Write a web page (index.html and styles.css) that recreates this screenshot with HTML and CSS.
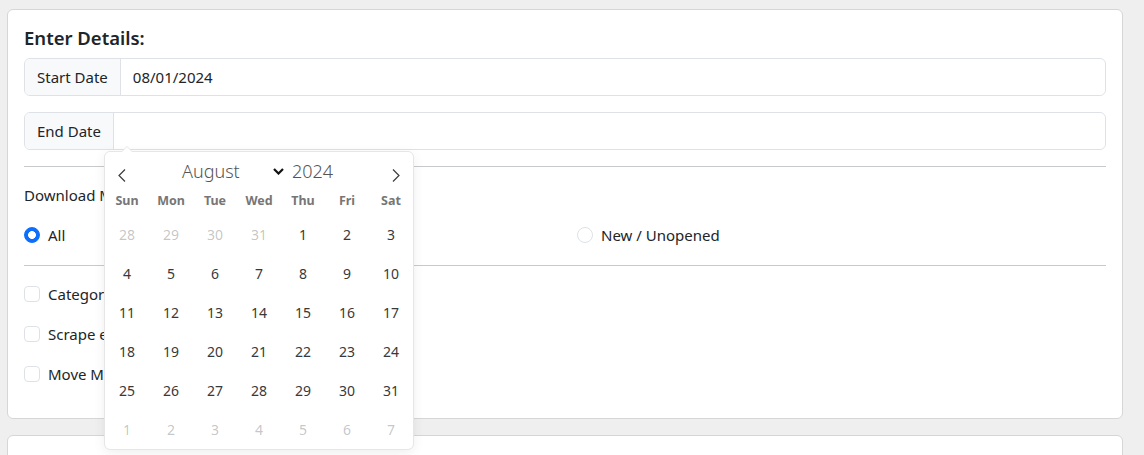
FILE: index.html
```html
<!DOCTYPE html>
<html lang="en">
<head>
<meta charset="utf-8">
<title>Enter Details</title>
<link rel="stylesheet" href="styles.css">
</head>
<body>
<div class="page">
  <div class="card">
    <div class="card-body">
      <h5 class="title">Enter Details:</h5>
      <div class="input-group gap-below">
        <span class="addon">Start Date</span>
        <input class="field" type="text" value="08/01/2024">
      </div>
      <div class="input-group end-group">
        <span class="addon">End Date</span>
        <input class="field" type="text" value="">
        <div class="fp">
          <div class="fp-months">
            <span class="fp-nav fp-prev">
              <svg width="8" height="13" viewBox="0 0 8 13"><polyline points="7,0.5 1,6.5 7,12.5" fill="none" stroke="#3c3c3c" stroke-width="1.2"/></svg>
            </span>
            <div class="fp-current">
              <span class="fp-month">August<svg class="fp-chev" width="11" height="7" viewBox="0 0 11 7"><polyline points="1,1 5.5,5.5 10,1" fill="none" stroke="#111" stroke-width="2.2"/></svg></span>
              <span class="fp-year">2024</span>
            </div>
            <span class="fp-nav fp-next">
              <svg width="8" height="13" viewBox="0 0 8 13"><polyline points="1,0.5 7,6.5 1,12.5" fill="none" stroke="#3c3c3c" stroke-width="1.2"/></svg>
            </span>
          </div>
          <div class="fp-weekdays">
            <span>Sun</span><span>Mon</span><span>Tue</span><span>Wed</span><span>Thu</span><span>Fri</span><span>Sat</span>
          </div>
          <div class="fp-days">
            <span class="other">28</span><span class="other">29</span><span class="other">30</span><span class="other">31</span><span>1</span><span>2</span><span>3</span>
            <span>4</span><span>5</span><span>6</span><span>7</span><span>8</span><span>9</span><span>10</span>
            <span>11</span><span>12</span><span>13</span><span>14</span><span>15</span><span>16</span><span>17</span>
            <span>18</span><span>19</span><span>20</span><span>21</span><span>22</span><span>23</span><span>24</span>
            <span>25</span><span>26</span><span>27</span><span>28</span><span>29</span><span>30</span><span>31</span>
            <span class="other">1</span><span class="other">2</span><span class="other">3</span><span class="other">4</span><span class="other">5</span><span class="other">6</span><span class="other">7</span>
          </div>
        </div>
      </div>
      <hr class="rule">
      <div class="label">Download Mode:</div>
      <div class="radio-row">
        <div class="col">
          <label class="check"><span class="radio checked"></span><span>All</span></label>
        </div>
        <div class="col">
          <label class="check"><span class="radio"></span><span>New / Unopened</span></label>
        </div>
      </div>
      <hr class="rule rule-2">
      <label class="check check-row"><span class="box"></span><span>Categorize downloads</span></label>
      <label class="check check-row"><span class="box"></span><span>Scrape episode metadata</span></label>
      <label class="check check-row"><span class="box"></span><span>Move Media to library</span></label>
    </div>
  </div>
  <div class="card card-next"></div>
</div>
</body>
</html>
```

FILE: styles.css
```css
* { box-sizing: border-box; }

html, body {
  margin: 0;
  background: #efefef;
}

body {
  font-family: "Noto Sans", "Open Sans", "DejaVu Sans", sans-serif;
  font-size: 15px;
  line-height: 24px;
  color: #212529;
}

.page {
  padding: 9px 21px 0 7px;
}

.card {
  background: #fff;
  border: 1px solid #d6d6d6;
  border-radius: 6px;
  margin-bottom: 16px;
}

.card-body {
  padding: 16px;
}

.card-next {
  height: 120px;
}

.title {
  margin: 0 0 8px;
  font-size: 18.5px;
  font-weight: 600;
  line-height: 24px;
  padding-top: 2px;
  margin-top: -2px;
}

.input-group {
  display: flex;
  border: 1px solid #dee2e6;
  border-radius: 6px;
  height: 38px;
}

.gap-below {
  margin-bottom: 16px;
}

.end-group {
  position: relative;
}

.addon {
  background: #f8f9fa;
  border-right: 1px solid #dee2e6;
  border-radius: 5px 0 0 5px;
  padding: 6px 12px;
  white-space: nowrap;
}

.field {
  flex: 1;
  border: 0;
  border-radius: 0 6px 6px 0;
  background: #fff;
  padding: 6px 12px;
  font: inherit;
  color: #212529;
  outline: none;
}

.rule {
  border: 0;
  border-top: 1px solid #c8c9ca;
  margin: 16px 0;
}

.rule-2 {
  margin-top: 18px;
}

.label {
  margin-bottom: 16px;
}

.radio-row {
  display: flex;
  margin: 0 -12px;
}

.col {
  flex: 1;
  padding: 0 12px;
}

.check {
  display: flex;
  align-items: center;
  height: 24px;
  gap: 8px;
}

.check-row {
  margin-bottom: 16px;
}

.radio {
  width: 16px;
  height: 16px;
  border-radius: 50%;
  border: 1px solid #dee2e6;
  background: #fff;
  flex: none;
}

.radio.checked {
  border-color: #0d6efd;
  background: radial-gradient(circle, #fff 0 3.6px, #0d6efd 4.2px);
}

.box {
  width: 16px;
  height: 16px;
  border-radius: 4px;
  border: 1px solid #dee2e6;
  background: #fff;
  flex: none;
}

/* calendar */
.fp {
  position: absolute;
  top: 39px;
  left: 80px;
  width: 308px;
  background: #fff;
  border-radius: 5px;
  box-shadow: 1px 0 0 #e6e6e6, -1px 0 0 #e6e6e6, 0 1px 0 #e6e6e6, 0 -1px 0 #e6e6e6, 0 3px 13px rgba(0, 0, 0, 0.08);
  font-size: 14px;
  z-index: 5;
}

.fp::before,
.fp::after {
  content: "";
  position: absolute;
  left: 22px;
  bottom: 100%;
  border: solid transparent;
}

.fp::before {
  border-width: 6px;
  margin-left: -6px;
  border-bottom-color: #e6e6e6;
}

.fp::after {
  border-width: 5px;
  margin-left: -5px;
  border-bottom-color: #fff;
}

.fp-months {
  display: flex;
  align-items: center;
  height: 35px;
}

.fp-nav {
  display: flex;
  width: 34px;
  justify-content: center;
  padding-top: 12px;
}

.fp-current {
  flex: 1;
  display: flex;
  align-items: center;
  padding-left: 43px;
  padding-top: 3px;
  color: #555;
  font-size: 18px;
  font-weight: 300;
  line-height: 24px;
}

.fp-month {
  display: inline-flex;
  align-items: center;
  justify-content: space-between;
  width: 102px;
}

.fp-chev {
  margin-top: 1px;
}

.fp-year {
  margin-left: 8px;
}

.fp-weekdays {
  display: grid;
  grid-template-columns: repeat(7, 44px);
  height: 28px;
  align-items: center;
  text-align: center;
  font-size: 12.5px;
  font-weight: 700;
  color: #767676;
}

.fp-days {
  display: grid;
  grid-template-columns: repeat(7, 44px);
  grid-auto-rows: 39px;
  align-items: center;
  text-align: center;
  color: #393939;
}

.fp-days .other {
  color: rgba(57, 57, 57, 0.3);
}
```
